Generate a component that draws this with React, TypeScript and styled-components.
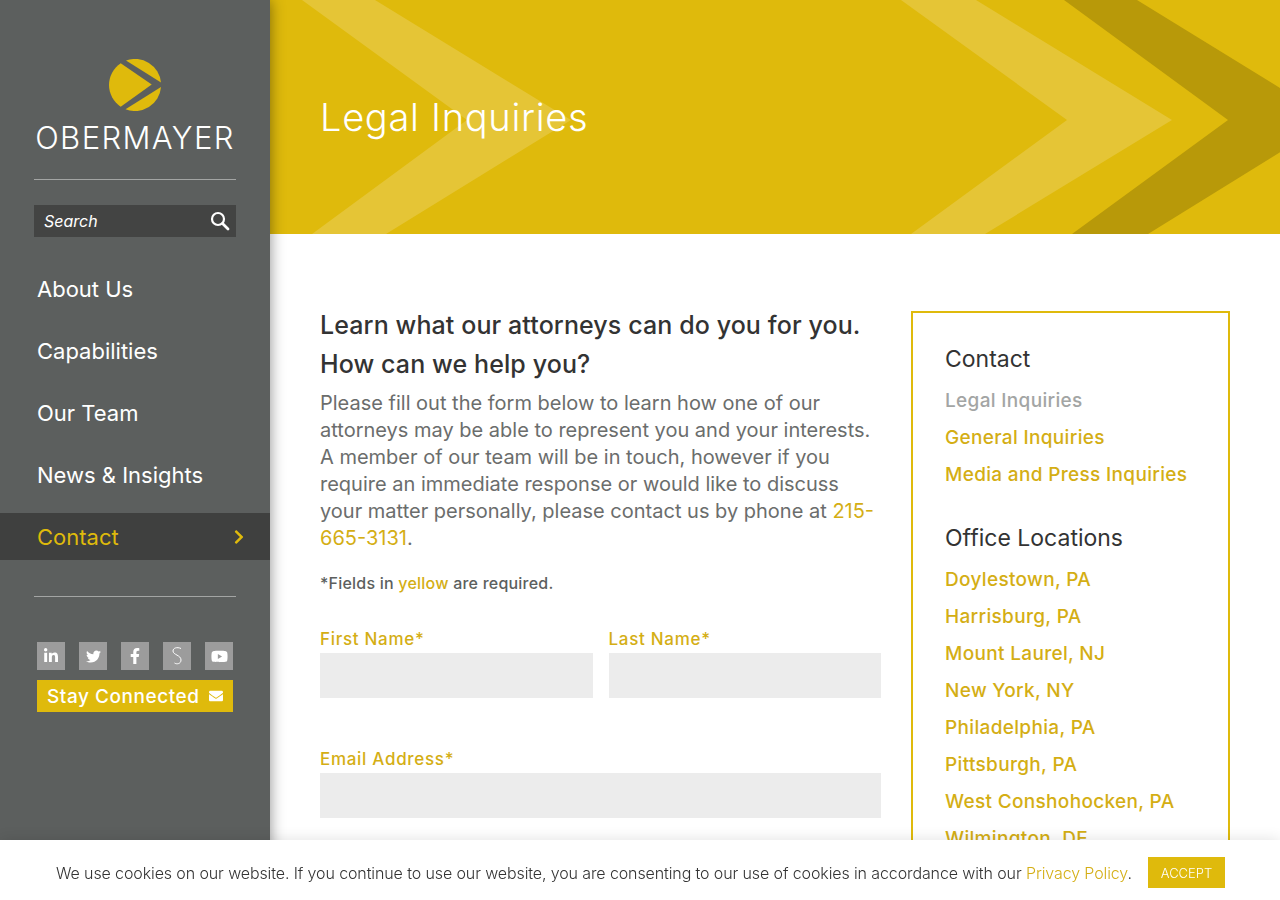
import { FC } from "react";
import styled, { createGlobalStyle } from "styled-components";
import { FaLinkedinIn, FaTwitter, FaFacebookF, FaYoutube, FaEnvelope, FaChevronRight } from "react-icons/fa";

const FONT = `Inter, "Open Sans", "Liberation Sans", sans-serif`;
const GOLD = "#dfba0c";
const LINK = "#d4ae14";

const Global = createGlobalStyle`
  html, body { margin: 0; padding: 0; height: 100%; overflow: hidden; background: #fff; }
  body { font-family: ${FONT}; color: #333; }
  * { box-sizing: border-box; }
`;

const navItems = ["About Us", "Capabilities", "Our Team", "News & Insights"];
const offices = ["Doylestown, PA", "Harrisburg, PA", "Mount Laurel, NJ", "New York, NY", "Philadelphia, PA", "Pittsburgh, PA", "West Conshohocken, PA", "Wilmington, DE"];

const Logo: FC = () => (
  <S.LogoMark viewBox="0 0 52 52">
    <path d="M11.7 4.3 A26 26 0 0 0 11.7 47.7 L42.7 25.6 Z" fill={GOLD} />
    <path d="M17 1.6 A26 26 0 0 1 52 23.4 Z" fill={GOLD} />
    <path d="M16.5 50.2 A26 26 0 0 0 52 28 Z" fill={GOLD} />
  </S.LogoMark>
);

const SearchIcon: FC = () => (
  <svg width="20" height="20" viewBox="0 0 20 20" fill="none" stroke="#fff">
    <circle cx="8" cy="8" r="6" strokeWidth="2.2" />
    <path d="M12.5 12.5 L18 18" strokeWidth="2.8" strokeLinecap="round" />
  </svg>
);

const Hero: FC = () => (
  <S.HeroArt viewBox="0 0 1010 234" preserveAspectRatio="none">
    <path d="M32 0 H105 L301 120 L116 234 H42 L197 120 Z" fill="#e5c536" />
    <path d="M631 0 H706 L902 120 L715 234 H641 L797 120 Z" fill="#e5c536" />
    <path d="M794 0 H867 L1062 120 L878 234 H802 L958 120 Z" fill="#b89909" />
  </S.HeroArt>
);

export default function App() {
  return (
    <S.Page>
      <Global />
      <S.Sidebar>
        <S.Brand>
          <Logo />
          <S.BrandName>OBERMAYER</S.BrandName>
        </S.Brand>
        <S.Rule />
        <S.Search>
          <S.SearchLabel>Search</S.SearchLabel>
          <SearchIcon />
        </S.Search>
        <S.Nav>
          {navItems.map(item => <S.NavItem key={item}>{item}</S.NavItem>)}
          <S.NavItem active>
            Contact
            <FaChevronRight size={16} />
          </S.NavItem>
        </S.Nav>
        <S.Rule />
        <S.Social>
          <S.SocialBtn><FaLinkedinIn size={16} /></S.SocialBtn>
          <S.SocialBtn><FaTwitter size={15} /></S.SocialBtn>
          <S.SocialBtn><FaFacebookF size={16} /></S.SocialBtn>
          <S.SocialBtn>
            <svg width="10" height="18" viewBox="0 0 10 18" fill="none" stroke="#fff" strokeWidth="1">
              <path d="M9 1.5 C5 -0.3 1 1 1 4 C1 8 9 8 9 13 C9 17 4.5 17.5 2.5 16" />
            </svg>
          </S.SocialBtn>
          <S.SocialBtn><FaYoutube size={17} /></S.SocialBtn>
        </S.Social>
        <S.Stay>
          Stay Connected
          <FaEnvelope size={14} />
        </S.Stay>
      </S.Sidebar>

      <S.Main>
        <S.Banner>
          <Hero />
          <S.Title>Legal Inquiries</S.Title>
        </S.Banner>
        <S.Columns>
          <S.Content>
            <S.Lead>Learn what our attorneys can do you for you.</S.Lead>
            <S.Lead>How can we help you?</S.Lead>
            <S.Body>
              Please fill out the form below to learn how one of our<br />
              attorneys may be able to represent you and your interests.<br />
              A member of our team will be in touch, however if you<br />
              require an immediate response or would like to discuss<br />
              your matter personally, please contact us by phone at <S.Phone>215-<br />665-3131</S.Phone>.
            </S.Body>
            <S.Note>*Fields in <S.NoteGold>yellow</S.NoteGold> are required.</S.Note>
            <S.FormRow>
              <S.Field>
                <S.Label>First Name*</S.Label>
                <S.Input />
              </S.Field>
              <S.Field>
                <S.Label>Last Name*</S.Label>
                <S.Input />
              </S.Field>
            </S.FormRow>
            <S.Field>
              <S.Label>Email Address*</S.Label>
              <S.Input />
            </S.Field>
          </S.Content>
          <S.Aside>
            <S.AsideTitle>Contact</S.AsideTitle>
            <S.AsideLink muted>Legal Inquiries</S.AsideLink>
            <S.AsideLink>General Inquiries</S.AsideLink>
            <S.AsideLink>Media and Press Inquiries</S.AsideLink>
            <S.AsideTitle second>Office Locations</S.AsideTitle>
            {offices.map(o => <S.AsideLink key={o}>{o}</S.AsideLink>)}
          </S.Aside>
        </S.Columns>
      </S.Main>

      <S.Cookie>
        <S.CookieText>
          We use cookies on our website. If you continue to use our website, you are consenting to our use of cookies in accordance with our <S.CookieLink>Privacy Policy</S.CookieLink>.
        </S.CookieText>
        <S.Accept>ACCEPT</S.Accept>
      </S.Cookie>
    </S.Page>
  );
}

const S = {
  Page: styled.div`
    display: flex;
    width: 1280px;
    height: 900px;
    overflow: hidden;
  `,
  Sidebar: styled.aside`
    width: 270px;
    flex-shrink: 0;
    background: #5c5f5e;
    display: flex;
    flex-direction: column;
    padding-top: 59px;
    box-shadow: 0 0 14px rgba(0, 0, 0, .45);
    z-index: 2;
  `,
  Brand: styled.div`
    display: flex;
    flex-direction: column;
    align-items: center;
  `,
  LogoMark: styled.svg`
    width: 52px;
    height: 52px;
  `,
  BrandName: styled.div`
    color: #fff;
    font-size: 31px;
    line-height: 38px;
    font-weight: 300;
    letter-spacing: 1.4px;
    margin-top: 8px;
  `,
  Rule: styled.div`
    height: 1px;
    margin: 22px 34px 0;
    background: #a3a5a4;
    flex-shrink: 0;
  `,
  Search: styled.div`
    display: flex;
    align-items: center;
    justify-content: space-between;
    height: 32px;
    margin: 25px 34px 0;
    padding: 0 6px 0 10px;
    background: #434443;
    color: #fff;
  `,
  SearchLabel: styled.span`
    font-size: 16px;
    font-style: italic;
  `,
  Nav: styled.nav`
    display: flex;
    flex-direction: column;
    gap: 15px;
    margin-top: 28px;
    margin-bottom: 14px;
  `,
  NavItem: styled.a<{ active?: boolean }>`
    display: flex;
    align-items: center;
    justify-content: space-between;
    height: 47px;
    padding: 0 26px 0 37px;
    font-size: 22px;
    color: ${p => p.active ? GOLD : "#fff"};
    background: ${p => p.active ? "#3f403f" : "none"};
    svg { margin-right: -3px; }
  `,
  Social: styled.div`
    display: flex;
    justify-content: space-between;
    margin: 45px 37px 0;
  `,
  SocialBtn: styled.a`
    width: 28px;
    height: 28px;
    display: flex;
    align-items: center;
    justify-content: center;
    background: #9c9c9c;
    color: #fff;
  `,
  Stay: styled.a`
    display: flex;
    align-items: center;
    justify-content: space-between;
    height: 32px;
    margin: 10px 37px 0;
    padding: 0 10px;
    background: ${GOLD};
    color: #fff;
    font-size: 19px;
    font-weight: 500;
    letter-spacing: .55px;
  `,
  Main: styled.main`
    flex: 1;
    min-width: 0;
  `,
  Banner: styled.header`
    position: relative;
    height: 234px;
    background: ${GOLD};
    display: flex;
    align-items: center;
    padding: 0 50px;
  `,
  HeroArt: styled.svg`
    position: absolute;
    inset: 0;
    width: 100%;
    height: 100%;
  `,
  Title: styled.h1`
    position: relative;
    margin: 0;
    color: #fff;
    font-size: 38px;
    font-weight: 300;
    letter-spacing: .7px;
  `,
  Columns: styled.div`
    display: flex;
    gap: 30px;
    padding: 72px 50px 0;
    align-items: flex-start;
  `,
  Content: styled.section`
    width: 561px;
    flex-shrink: 0;
    display: flex;
    flex-direction: column;
  `,
  Lead: styled.h2`
    margin: 0;
    font-size: 25px;
    line-height: 39px;
    font-weight: 450;
    letter-spacing: .1px;
    color: #333;
  `,
  Body: styled.p`
    margin: 6px 0 0;
    font-size: 20px;
    line-height: 27px;
    color: #6b6d6c;
  `,
  Phone: styled.a`
    color: ${LINK};
  `,
  Note: styled.p`
    margin: 19px 0 0;
    font-size: 16px;
    line-height: 24px;
    font-weight: 500;
    letter-spacing: .22px;
    color: #5c5f5e;
  `,
  NoteGold: styled.span`
    color: ${LINK};
  `,
  FormRow: styled.div`
    display: flex;
    gap: 16px;
    margin-top: 32px;
    margin-bottom: 49px;
  `,
  Field: styled.div`
    flex: 1;
    display: flex;
    flex-direction: column;
  `,
  Label: styled.label`
    font-size: 17px;
    line-height: 24px;
    font-weight: 450;
    letter-spacing: .7px;
    margin-bottom: 2px;
    color: ${LINK};
  `,
  Input: styled.div`
    height: 45px;
    background: #ececec;
  `,
  Aside: styled.aside`
    width: 319px;
    height: 700px;
    flex-shrink: 0;
    margin-top: 5px;
    border: 2px solid ${GOLD};
    padding: 28px 32px;
    display: flex;
    flex-direction: column;
  `,
  AsideTitle: styled.h3<{ second?: boolean }>`
    margin: ${p => p.second ? "27px" : "0"} 0 5px;
    font-size: 23px;
    line-height: 36px;
    font-weight: 400;
    color: #333;
  `,
  AsideLink: styled.a<{ muted?: boolean }>`
    font-size: 19px;
    line-height: 37px;
    font-weight: 450;
    letter-spacing: .33px;
    color: ${p => p.muted ? "#a3a5a4" : LINK};
  `,
  Cookie: styled.div`
    position: fixed;
    left: 0;
    right: 0;
    bottom: 0;
    height: 60px;
    z-index: 5;
    background: #fff;
    box-shadow: 0 0 14px rgba(0, 0, 0, .12);
    display: flex;
    align-items: center;
    padding: 6px 55px 0 56px;
    justify-content: space-between;
  `,
  CookieText: styled.div`
    font-size: 16px;
    font-weight: 300;
    letter-spacing: -.11px;
    color: #333;
    white-space: nowrap;
  `,
  CookieLink: styled.a`
    color: ${LINK};
  `,
  Accept: styled.button`
    width: 77px;
    height: 31px;
    margin-bottom: 1px;
    border: none;
    background: ${GOLD};
    color: #fff;
    font-family: ${FONT};
    font-size: 13px;
    font-weight: 300;
  `,
};
